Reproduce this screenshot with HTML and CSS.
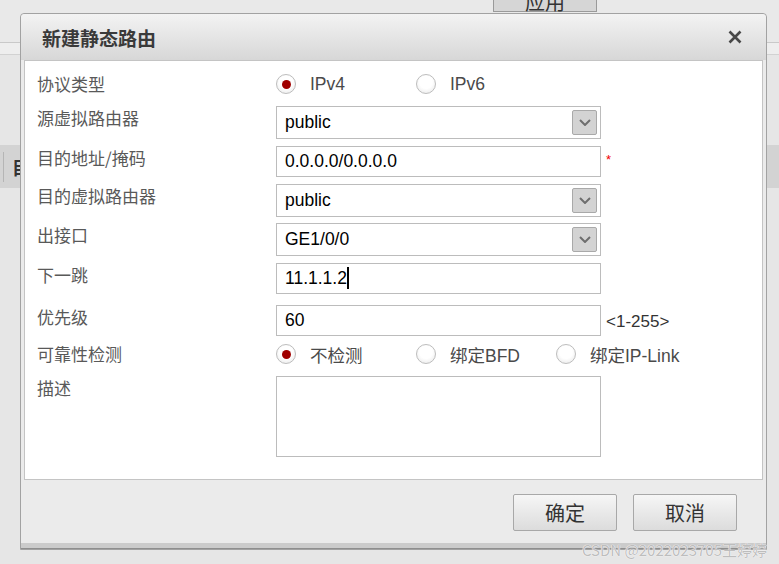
FILE: index.html
```html
<!DOCTYPE html>
<html lang="zh-CN">
<head>
    <meta charset="UTF-8">
    <meta name="viewport" content="width=device-width, initial-scale=1.0">
    <title>新建静态路由</title>
    <link rel="stylesheet" href="styles.css">
</head>
<body>
    <div class="page">
        <div class="topbar"><span class="apply-btn">应用</span></div>
        <div class="strip"></div>
        <div class="tabband"><span class="tab-edge"></span><span class="tab-text">目</span></div>
    </div>

    <div class="dialog">
        <div class="dialog-head">
            <span class="dialog-title">新建静态路由</span>
            <svg class="close" width="16" height="16" viewBox="0 0 16 16">
                <path d="M2.5 2.5 L13.5 13.5 M13.5 2.5 L2.5 13.5" stroke="#474747" stroke-width="2.6" fill="none"/>
            </svg>
        </div>

        <div class="dialog-body">
            <div class="row row-radio row-first">
                <span class="label">协议类型</span>
                <span class="option"><span class="radio checked"></span>IPv4</span>
                <span class="option"><span class="radio"></span>IPv6</span>
            </div>
            <div class="row row-tight">
                <span class="label">源虚拟路由器</span>
                <div class="field select">public<span class="drop"><svg width="12" height="7" viewBox="0 0 12 7"><polyline points="1,1 6,6 11,1" stroke="#6e6e6e" stroke-width="2" fill="none"/></svg></span></div>
            </div>
            <div class="row">
                <span class="label">目的地址/掩码</span>
                <div class="field">0.0.0.0/0.0.0.0</div>
                <span class="required">*</span>
            </div>
            <div class="row">
                <span class="label">目的虚拟路由器</span>
                <div class="field select">public<span class="drop"><svg width="12" height="7" viewBox="0 0 12 7"><polyline points="1,1 6,6 11,1" stroke="#6e6e6e" stroke-width="2" fill="none"/></svg></span></div>
            </div>
            <div class="row row-tight">
                <span class="label">出接口</span>
                <div class="field select">GE1/0/0<span class="drop"><svg width="12" height="7" viewBox="0 0 12 7"><polyline points="1,1 6,6 11,1" stroke="#6e6e6e" stroke-width="2" fill="none"/></svg></span></div>
            </div>
            <div class="row">
                <span class="label">下一跳</span>
                <div class="field">11.1.1.2<span class="caret"></span></div>
            </div>
            <div class="row row-wide">
                <span class="label">优先级</span>
                <div class="field">60</div>
                <span class="hint">&lt;1-255&gt;</span>
            </div>
            <div class="row row-radio row-close">
                <span class="label">可靠性检测</span>
                <span class="option"><span class="radio checked"></span>不检测</span>
                <span class="option option-wide"><span class="radio"></span>绑定BFD</span>
                <span class="option"><span class="radio"></span>绑定IP-Link</span>
            </div>
            <div class="row row-tight">
                <span class="label">描述</span>
                <div class="field textarea"></div>
            </div>
        </div>

        <div class="dialog-foot">
            <span class="btn">确定</span>
            <span class="btn">取消</span>
        </div>
        <div class="dialog-bottom"></div>
    </div>

    <div class="watermark">CSDN @2022023705王婷婷</div>
</body>
</html>
```

FILE: styles.css
```css
body {
    margin: 0;
    width: 779px;
    height: 564px;
    overflow: hidden;
    position: relative;
    background-color: #e6e6e6;
    font-family: "Liberation Sans", "Noto Sans CJK SC", sans-serif;
}
.topbar {
    height: 42px;
    background-color: #e9e9e9;
    border-bottom: 1px solid #c9c9c9;
    overflow: hidden;
}
.apply-btn {
    display: block;
    box-sizing: border-box;
    width: 104px;
    height: 26px;
    margin: -14px 0 0 493px;
    padding-top: 5px;
    line-height: 20px;
    text-align: center;
    font-family: "Noto Sans CJK SC", sans-serif;
    font-size: 20px;
    color: #333;
    background-color: #d6d6d6;
    border: 1px solid #9a9a9a;
}
.strip {
    height: 11px;
    background-color: #eeeeee;
    border-bottom: 1px solid #d2d2d2;
}
.tabband {
    display: flex;
    align-items: center;
    height: 43px;
    margin-top: 90px;
    background-color: #d3d3d3;
}
.tab-edge {
    width: 1px;
    height: 30px;
    margin-left: 3px;
    background-color: #b5b5b5;
}
.tab-text {
    margin-left: 8px;
    font-family: "Noto Sans CJK SC", sans-serif;
    font-weight: bold;
    font-size: 18px;
    color: #333;
}

.dialog {
    position: absolute;
    left: 20px;
    top: 13px;
    width: 747px;
    height: 537px;
    box-sizing: border-box;
    display: flex;
    flex-direction: column;
    background-color: #ebebeb;
    border: 1px solid #a2a2a2;
    border-radius: 4px 4px 0 0;
}
.dialog-head {
    display: flex;
    align-items: center;
    justify-content: space-between;
    height: 46px;
    padding: 0 23px 0 21px;
    background: linear-gradient(#f3f3f3, #d7d7d7);
    border-radius: 4px 4px 0 0;
}
.dialog-title {
    font-family: "Noto Sans CJK SC", sans-serif;
    font-weight: bold;
    font-size: 19px;
    color: #3a3a3a;
}
.dialog-body {
    box-sizing: border-box;
    height: 420px;
    margin: 0 3px;
    padding: 7px 12px 0;
    background-color: #fff;
    border: 1px solid #c4c4c4;
}
.row {
    display: flex;
    align-items: flex-start;
    margin-top: 7px;
}
.row-first { margin-top: 0; }
.row-tight { margin-top: 6px; }
.row-wide { margin-top: 11px; }
.row-close { margin-top: 2px; }
.row-radio {
    align-items: center;
    height: 32px;
}
.label {
    flex: none;
    width: 239px;
    line-height: 24px;
    font-family: "Noto Sans CJK SC", sans-serif;
    font-size: 17px;
    color: #595959;
}
.option {
    display: flex;
    align-items: center;
    width: 140px;
    font-family: "Liberation Sans", "Noto Sans CJK SC", sans-serif;
    font-size: 17.5px;
    color: #4a4a4a;
}
.option-wide {
    width: 140px;
}
.row-radio .option:first-of-type {
    width: 138px;
    margin-left: 1px;
}
.radio {
    display: inline-flex;
    align-items: center;
    justify-content: center;
    box-sizing: border-box;
    width: 20px;
    height: 20px;
    margin-right: 14px;
    border-radius: 50%;
    border: 1px solid #bdbdbd;
    background: radial-gradient(circle at 50% 40%, #fff 45%, #e4e4e4);
}
.radio.checked::after {
    content: "";
    width: 9px;
    height: 9px;
    border-radius: 50%;
    background-color: #a00000;
}
.field {
    position: relative;
    box-sizing: border-box;
    width: 325px;
    height: 31px;
    padding: 0 8px;
    line-height: 29px;
    font-size: 17.5px;
    color: #000;
    border: 1px solid #bcbcbc;
    background-color: #fff;
}
.select {
    height: 33px;
    line-height: 31px;
}
.textarea {
    height: 81px;
}
.drop {
    position: absolute;
    right: 3px;
    top: 3px;
    display: flex;
    align-items: center;
    justify-content: center;
    box-sizing: border-box;
    width: 25px;
    height: 25px;
    border: 1px solid #a9a9a9;
    border-radius: 2px;
    background-color: #d3d3d3;
}
.caret {
    display: inline-block;
    width: 2px;
    height: 22px;
    vertical-align: -5px;
    background-color: #000;
}
.required {
    margin: 7px 0 0 5px;
    font-size: 13px;
    line-height: 13px;
    color: #f20000;
}
.hint {
    margin: 2px 0 0 5px;
    line-height: 29px;
    font-size: 17px;
    color: #333;
}

.dialog-foot {
    display: flex;
    justify-content: flex-end;
    gap: 16px;
    height: 63px;
    box-sizing: border-box;
    padding: 14px 29px 0 0;
}
.btn {
    box-sizing: border-box;
    width: 104px;
    height: 37px;
    line-height: 35px;
    text-align: center;
    font-family: "Noto Sans CJK SC", sans-serif;
    font-size: 20px;
    color: #333;
    border: 1px solid #a8a8a8;
    border-radius: 2px;
    background: linear-gradient(#f6f6f6, #dcdcdc);
}
.dialog-bottom {
    flex: 1;
    background-color: #cbcbcb;
    border-bottom: 1px solid #8e8e8e;
}

.watermark {
    position: absolute;
    right: 12px;
    bottom: 4px;
    font-family: "Noto Sans CJK SC", sans-serif;
    font-size: 15px;
    color: #bdbdbd;
    text-shadow: 0 0 1px #fff, 0 0 1px #fff;
}
```
